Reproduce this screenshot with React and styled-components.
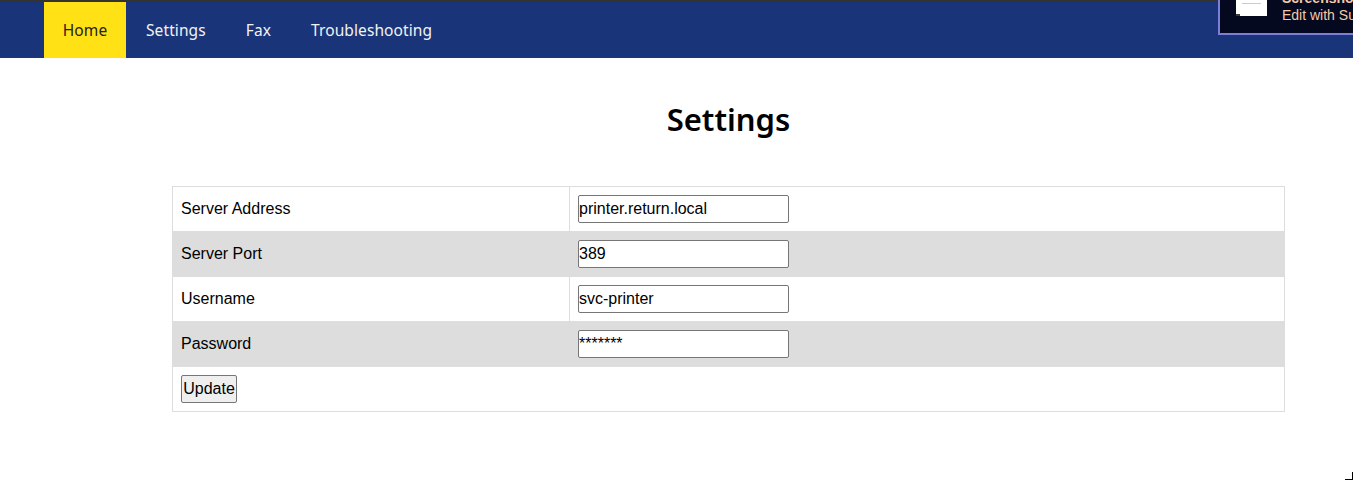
import React from 'react';
import styled, { createGlobalStyle } from 'styled-components';

const Global = createGlobalStyle`
html, body { margin: 0; padding: 0; background: #fff; }
body { font-family: "Liberation Sans", Arial, sans-serif; font-size: 16px; color: #000; overflow: hidden; }
`;

const navItems = ['Home', 'Settings', 'Fax', 'Troubleshooting'];

const rows = [
  { label: 'Server Address', value: 'printer.return.local' },
  { label: 'Server Port', value: '389' },
  { label: 'Username', value: 'svc-printer' },
  { label: 'Password', value: '*******' },
];

const App = () => (
  <Page>
    <Global />
    <Nav>
      {navItems.map((item, i) => (
        <NavLink key={item} $active={i === 0}>{item}</NavLink>
      ))}
    </Nav>
    <Popup>
      <Thumb>
        <ThumbLine />
        <ThumbNotch />
      </Thumb>
      <PopupText>
        <PopupTitle>Screenshot</PopupTitle>
        <PopupSub>Edit with Surface</PopupSub>
      </PopupText>
    </Popup>
    <Main>
      <Title>Settings</Title>
      <Table>
        <tbody>
          {rows.map((row) => (
            <Row key={row.label}>
              <LabelCell>{row.label}</LabelCell>
              <Cell><Input readOnly value={row.value} /></Cell>
            </Row>
          ))}
          <Row>
            <Cell colSpan={2}><Button type="button">Update</Button></Cell>
          </Row>
        </tbody>
      </Table>
    </Main>
    <Corner />
  </Page>
);

export default App;

const Page = styled.div`
position: relative;
width: 1353px;
height: 480px;
overflow: hidden;
`
const Nav = styled.nav`
display: flex;
height: 56px;
padding-left: 44px;
background: #1a3479;
border-top: 2px solid #333;
`
const NavLink = styled.a`
display: flex;
align-items: center;
padding: 0 ${(props) => (props.$active ? '18.75px' : '20px')};
font-family: "Noto Sans", sans-serif;
font-size: 15.5px;
letter-spacing: 0.1px;
color: ${(props) => (props.$active ? '#222' : '#f2f2f2')};
background: ${(props) => (props.$active ? '#ffe116' : 'transparent')};
`
const Popup = styled.div`
position: absolute;
top: -20px;
left: 1218px;
width: 200px;
height: 55px;
display: flex;
background: #04091f;
border: 2px solid #7b80d6;
box-sizing: border-box;
`
const Thumb = styled.div`
position: relative;
width: 31px;
height: 34px;
margin-left: 16px;
background: #fff;
`
const ThumbLine = styled.div`
position: absolute;
top: 21px;
left: 6px;
width: 19px;
height: 1px;
background: #ccc;
`
const ThumbNotch = styled.div`
position: absolute;
left: 0;
bottom: 0;
width: 4px;
height: 2px;
background: #3c3c46;
`
const PopupText = styled.div`
margin-left: 15px;
padding-top: 8px;
font-size: 14px;
line-height: 17px;
color: #f5c9a9;
white-space: nowrap;
`
const PopupTitle = styled.div`
font-weight: 700;
`
const PopupSub = styled.div``
const Main = styled.main`
margin: 0 68px 0 172px;
`
const Title = styled.h1`
margin: 42px 0 47px;
height: 39px;
line-height: 39px;
text-align: center;
font-family: "Noto Sans", sans-serif;
font-size: 31px;
font-weight: 600;
color: #000;
`
const Table = styled.table`
width: 100%;
table-layout: fixed;
border-collapse: collapse;
border: 1px solid #ddd;
`
const Row = styled.tr`
height: 45px;
&:nth-child(even) { background: #ddd; }
`
const Cell = styled.td`
padding: 8px;
border: 1px solid #ddd;
box-sizing: border-box;
`
const LabelCell = styled(Cell)`
width: 397px;
`
const Input = styled.input`
display: block;
box-sizing: border-box;
width: 211px;
height: 28px;
padding: 0;
font-family: "Liberation Sans", Arial, sans-serif;
font-size: 16px;
color: #000;
background: #fff;
border: 1px solid #767676;
border-radius: 2px;
`
const Button = styled.button`
display: block;
box-sizing: border-box;
height: 28px;
padding: 1px;
width: 56px;
font-family: "Liberation Sans", Arial, sans-serif;
font-size: 16px;
color: #000;
background: #efefef;
border: 1px solid #767676;
border-radius: 2px;
`
const Corner = styled.div`
position: absolute;
right: 0;
bottom: 0;
width: 8px;
height: 8px;
box-sizing: border-box;
border-right: 1px solid #000;
border-bottom: 1px solid #000;
`
